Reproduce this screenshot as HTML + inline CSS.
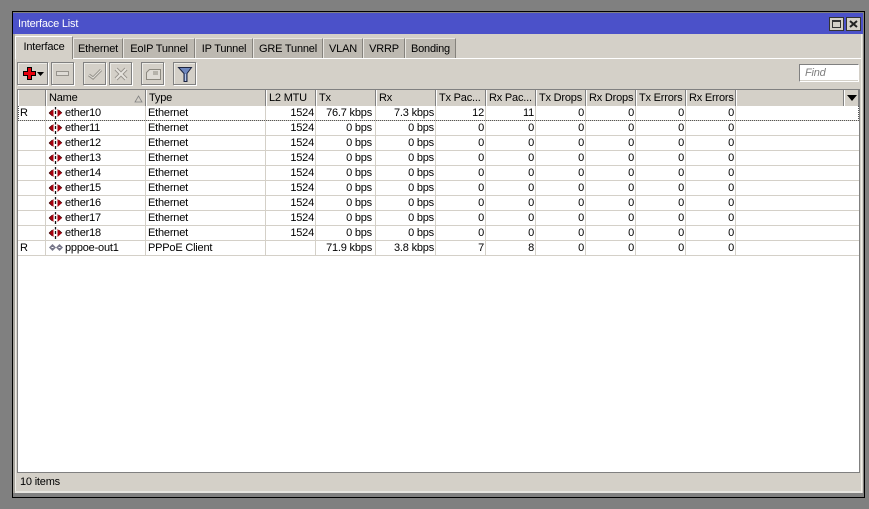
<!DOCTYPE html>
<html><head><meta charset="utf-8">
<style>
html,body{margin:0;padding:0;width:869px;height:509px;overflow:hidden;background:#808080}
*{box-sizing:border-box}
body{font:11px/13px "Liberation Sans",sans-serif;letter-spacing:-.2px;color:#000;position:relative}
.a{position:absolute}
.t{position:absolute;white-space:nowrap}
.tab{position:absolute;top:38px;height:20px;background:#bdb9b1;border-top:1px solid #e8e6e1;border-right:1px solid #85827c;border-left:1px solid #e8e6e1;text-align:center;line-height:20px;white-space:nowrap}
.btn{position:absolute;top:62px;height:23px;background:#d4d0c8;border:1px solid #808080;box-shadow:1px 1px 0 #fff,inset 1px 1px 0 #ecebe6}
.hc{position:absolute;top:90px;height:16px;background:#d4d0c8;border-left:1px solid #fff;border-right:1px solid #808080;padding-left:2px;line-height:16px;white-space:nowrap;overflow:hidden}
.row{position:absolute;left:18px;width:841px;height:15px;border-bottom:1px solid #d4d0c8}
.v{position:absolute;top:106px;height:150px;width:1px;background:#d4d0c8}
.c{position:absolute;top:0;line-height:14px;white-space:nowrap}
.r{text-align:right}
</style></head><body>
<div class="a" style="left:12px;top:11px;width:853px;height:487px;background:#000"></div>
<div class="a" style="left:13px;top:12px;width:851px;height:485px;background:#808080"></div>
<div class="a" style="left:13px;top:13px;width:850px;height:21px;background:#4b51c9"></div>
<div class="a" style="left:13px;top:34px;width:850px;height:459px;background:#d4d0c8"></div>
<div class="a" style="left:13px;top:34px;width:2px;height:459px;background:#a5a29b"></div>
<div class="a" style="left:15px;top:59px;width:1px;height:433px;background:#f0eee9"></div>
<div class="a" style="left:15px;top:491px;width:847px;height:2px;background:#e8e6e1"></div>
<div class="a" style="left:861px;top:34px;width:1px;height:459px;background:#f0eee9"></div>
<div class="t" style="left:18px;top:18px;color:#fff">Interface List</div>
<div class="a" style="left:829px;top:17px;width:15px;height:14px;background:#d4d0c8;border:1px solid #333"><div class="a" style="left:2px;top:2px;width:9px;height:8px;border:1px solid #333;border-top-width:2px"></div></div>
<div class="a" style="left:846px;top:17px;width:15px;height:14px;background:#d4d0c8;border:1px solid #333"><svg class="a" style="left:2px;top:2px" width="9" height="8"><path d="M1 1L8 7M8 1L1 7" stroke="#222" stroke-width="2"/></svg></div>

<div class="a" style="left:15px;top:58px;width:846px;height:1px;background:#fff"></div>
<div class="tab" style="left:73px;width:50px">Ethernet</div>
<div class="tab" style="left:123px;width:72px">EoIP Tunnel</div>
<div class="tab" style="left:195px;width:58px">IP Tunnel</div>
<div class="tab" style="left:253px;width:70px">GRE Tunnel</div>
<div class="tab" style="left:323px;width:40px">VLAN</div>
<div class="tab" style="left:363px;width:42px">VRRP</div>
<div class="tab" style="left:405px;width:51px">Bonding</div>
<div class="tab" style="left:15px;top:36px;width:58px;height:23px;background:#d4d0c8;border-top:1px solid #fff;border-left:1px solid #fff;border-bottom:0;line-height:21px">Interface</div>

<div class="btn" style="left:17px;width:31px"><svg class="a" style="left:3px;top:2px" width="26" height="18"><path d="M6.500 2.500h4v4h4v4h-4v4h-4v-4h-4v-4h4z" fill="#e8000c" stroke="#000"/><path d="M16 7h7l-3.500 4z" fill="#000"/></svg></div>
<div class="btn" style="left:51px;width:23px"><div class="a" style="left:4px;top:8px;width:13px;height:5px;background:#dedbd5;border:1px solid #96938c"></div></div>
<div class="btn" style="left:83px;width:23px"><svg class="a" style="left:3px;top:3px" width="16" height="16"><path d="M2 9l4 3 8-8" fill="none" stroke="#96938c" stroke-width="3"/><path d="M2 9l4 3 8-8" fill="none" stroke="#e6e3dd" stroke-width="1"/></svg></div>
<div class="btn" style="left:109px;width:23px"><svg class="a" style="left:3px;top:3px" width="16" height="16"><path d="M3 3l10 10M13 3L3 13" fill="none" stroke="#96938c" stroke-width="4"/><path d="M3 3l10 10M13 3L3 13" fill="none" stroke="#e6e3dd" stroke-width="2"/></svg></div>
<div class="btn" style="left:141px;width:23px"><svg class="a" style="left:3px;top:4px" width="17" height="14"><path d="M1.500 5.500l3-3h11v10h-14z" fill="#dedbd5" stroke="#8c8980"/><path d="M8 5h5M8 7h5" stroke="#8c8980"/></svg></div>
<div class="btn" style="left:173px;width:23px"><svg class="a" style="left:3px;top:3px" width="17" height="17"><path d="M1.500 1.500h13L10 7.500v8H7v-8z" fill="#6d86bd" stroke="#1c2440"/><path d="M8 8h1v7H8z" fill="#b9c8e6"/></svg></div>

<div class="a" style="left:799px;top:64px;width:60px;height:18px;background:#fff;border:1px solid #808080;border-right-color:#fff;border-bottom-color:#fff;box-shadow:inset 0 -1px #d4d0c8"></div>
<div class="t" style="left:805px;top:67px;color:#808080;font-style:italic">Find</div>

<div class="a" style="left:17px;top:89px;width:843px;height:384px;background:#fff;border:1px solid #808080"></div>

<div class="hc" style="left:18px;width:28px"></div>
<div class="hc" style="left:46px;width:100px">Name<svg class="a" style="left:87px;top:5px" width="9" height="8"><path d="M4.500 1L8 7H1z" fill="#d4d0c8" stroke="#808080" stroke-width=".8"/></svg></div>
<div class="hc" style="left:146px;width:120px">Type</div>
<div class="hc" style="left:266px;width:50px">L2 MTU</div>
<div class="hc" style="left:316px;width:60px">Tx</div>
<div class="hc" style="left:376px;width:60px">Rx</div>
<div class="hc" style="left:436px;width:50px">Tx Pac...</div>
<div class="hc" style="left:486px;width:50px">Rx Pac...</div>
<div class="hc" style="left:536px;width:50px">Tx Drops</div>
<div class="hc" style="left:586px;width:50px">Rx Drops</div>
<div class="hc" style="left:636px;width:50px">Tx Errors</div>
<div class="hc" style="left:686px;width:50px">Rx Errors</div>
<div class="hc" style="left:736px;width:108px"></div>
<div class="hc" style="left:844px;width:15px"><svg class="a" style="left:2px;top:5px" width="10" height="6"><path d="M0 0h10L5 6z" fill="#000"/></svg></div>

<div class="v" style="left:45px"></div><div class="v" style="left:145px"></div><div class="v" style="left:265px"></div><div class="v" style="left:315px"></div><div class="v" style="left:375px"></div><div class="v" style="left:435px"></div><div class="v" style="left:485px"></div><div class="v" style="left:535px"></div><div class="v" style="left:585px"></div><div class="v" style="left:635px"></div><div class="v" style="left:685px"></div><div class="v" style="left:735px"></div>

<svg width="0" height="0" style="position:absolute"><defs>
<g id="e"><path d="M0 4l4.500-4v8z" fill="#a8000e"/><path d="M13 4L8.500 0v8z" fill="#a8000e"/><path d="M0 4l3-2.700M0 4l3 2.700M13 4l-3-2.700" stroke="#300" stroke-width=".7" fill="none"/><path d="M6.500 -2v2.500M6.500 2v3M6.500 7v3" stroke="#111" stroke-width="1.300"/></g>
<g id="p"><path d="M0 3.500l3.500-3.500 3.500 3.500-3.500 3.500z" fill="#77778a"/><path d="M7 3.500l3.500-3.500 3.500 3.500-3.500 3.500z" fill="#77778a"/><path d="M2.500 3.500h2M9.500 3.500h2" stroke="#fff"/></g>
</defs></svg>

<div class="row" style="top:106px;height:15px"><div class="c" style="left:2px">R</div><svg class="a" style="left:31px;top:3px;overflow:visible" width="13" height="8"><use href="#e"/></svg><div class="c" style="left:47px">ether10</div><div class="c" style="left:130px">Ethernet</div><div class="c r" style="left:248px;width:48px">1524</div><div class="c r" style="left:298px;width:56px">76.7 kbps</div><div class="c r" style="left:358px;width:58px">7.3 kbps</div><div class="c r" style="left:418px;width:48px">12</div><div class="c r" style="left:468px;width:48px">11</div><div class="c r" style="left:518px;width:48px">0</div><div class="c r" style="left:568px;width:48px">0</div><div class="c r" style="left:618px;width:48px">0</div><div class="c r" style="left:668px;width:48px">0</div></div>
<div class="row" style="top:121px"><svg class="a" style="left:31px;top:3px;overflow:visible" width="13" height="8"><use href="#e"/></svg><div class="c" style="left:47px">ether11</div><div class="c" style="left:130px">Ethernet</div><div class="c r" style="left:248px;width:48px">1524</div><div class="c r" style="left:298px;width:56px">0 bps</div><div class="c r" style="left:358px;width:58px">0 bps</div><div class="c r" style="left:418px;width:48px">0</div><div class="c r" style="left:468px;width:48px">0</div><div class="c r" style="left:518px;width:48px">0</div><div class="c r" style="left:568px;width:48px">0</div><div class="c r" style="left:618px;width:48px">0</div><div class="c r" style="left:668px;width:48px">0</div></div>
<div class="row" style="top:136px"><svg class="a" style="left:31px;top:3px;overflow:visible" width="13" height="8"><use href="#e"/></svg><div class="c" style="left:47px">ether12</div><div class="c" style="left:130px">Ethernet</div><div class="c r" style="left:248px;width:48px">1524</div><div class="c r" style="left:298px;width:56px">0 bps</div><div class="c r" style="left:358px;width:58px">0 bps</div><div class="c r" style="left:418px;width:48px">0</div><div class="c r" style="left:468px;width:48px">0</div><div class="c r" style="left:518px;width:48px">0</div><div class="c r" style="left:568px;width:48px">0</div><div class="c r" style="left:618px;width:48px">0</div><div class="c r" style="left:668px;width:48px">0</div></div>
<div class="row" style="top:151px"><svg class="a" style="left:31px;top:3px;overflow:visible" width="13" height="8"><use href="#e"/></svg><div class="c" style="left:47px">ether13</div><div class="c" style="left:130px">Ethernet</div><div class="c r" style="left:248px;width:48px">1524</div><div class="c r" style="left:298px;width:56px">0 bps</div><div class="c r" style="left:358px;width:58px">0 bps</div><div class="c r" style="left:418px;width:48px">0</div><div class="c r" style="left:468px;width:48px">0</div><div class="c r" style="left:518px;width:48px">0</div><div class="c r" style="left:568px;width:48px">0</div><div class="c r" style="left:618px;width:48px">0</div><div class="c r" style="left:668px;width:48px">0</div></div>
<div class="row" style="top:166px"><svg class="a" style="left:31px;top:3px;overflow:visible" width="13" height="8"><use href="#e"/></svg><div class="c" style="left:47px">ether14</div><div class="c" style="left:130px">Ethernet</div><div class="c r" style="left:248px;width:48px">1524</div><div class="c r" style="left:298px;width:56px">0 bps</div><div class="c r" style="left:358px;width:58px">0 bps</div><div class="c r" style="left:418px;width:48px">0</div><div class="c r" style="left:468px;width:48px">0</div><div class="c r" style="left:518px;width:48px">0</div><div class="c r" style="left:568px;width:48px">0</div><div class="c r" style="left:618px;width:48px">0</div><div class="c r" style="left:668px;width:48px">0</div></div>
<div class="row" style="top:181px"><svg class="a" style="left:31px;top:3px;overflow:visible" width="13" height="8"><use href="#e"/></svg><div class="c" style="left:47px">ether15</div><div class="c" style="left:130px">Ethernet</div><div class="c r" style="left:248px;width:48px">1524</div><div class="c r" style="left:298px;width:56px">0 bps</div><div class="c r" style="left:358px;width:58px">0 bps</div><div class="c r" style="left:418px;width:48px">0</div><div class="c r" style="left:468px;width:48px">0</div><div class="c r" style="left:518px;width:48px">0</div><div class="c r" style="left:568px;width:48px">0</div><div class="c r" style="left:618px;width:48px">0</div><div class="c r" style="left:668px;width:48px">0</div></div>
<div class="row" style="top:196px"><svg class="a" style="left:31px;top:3px;overflow:visible" width="13" height="8"><use href="#e"/></svg><div class="c" style="left:47px">ether16</div><div class="c" style="left:130px">Ethernet</div><div class="c r" style="left:248px;width:48px">1524</div><div class="c r" style="left:298px;width:56px">0 bps</div><div class="c r" style="left:358px;width:58px">0 bps</div><div class="c r" style="left:418px;width:48px">0</div><div class="c r" style="left:468px;width:48px">0</div><div class="c r" style="left:518px;width:48px">0</div><div class="c r" style="left:568px;width:48px">0</div><div class="c r" style="left:618px;width:48px">0</div><div class="c r" style="left:668px;width:48px">0</div></div>
<div class="row" style="top:211px"><svg class="a" style="left:31px;top:3px;overflow:visible" width="13" height="8"><use href="#e"/></svg><div class="c" style="left:47px">ether17</div><div class="c" style="left:130px">Ethernet</div><div class="c r" style="left:248px;width:48px">1524</div><div class="c r" style="left:298px;width:56px">0 bps</div><div class="c r" style="left:358px;width:58px">0 bps</div><div class="c r" style="left:418px;width:48px">0</div><div class="c r" style="left:468px;width:48px">0</div><div class="c r" style="left:518px;width:48px">0</div><div class="c r" style="left:568px;width:48px">0</div><div class="c r" style="left:618px;width:48px">0</div><div class="c r" style="left:668px;width:48px">0</div></div>
<div class="row" style="top:226px"><svg class="a" style="left:31px;top:3px;overflow:visible" width="13" height="8"><use href="#e"/></svg><div class="c" style="left:47px">ether18</div><div class="c" style="left:130px">Ethernet</div><div class="c r" style="left:248px;width:48px">1524</div><div class="c r" style="left:298px;width:56px">0 bps</div><div class="c r" style="left:358px;width:58px">0 bps</div><div class="c r" style="left:418px;width:48px">0</div><div class="c r" style="left:468px;width:48px">0</div><div class="c r" style="left:518px;width:48px">0</div><div class="c r" style="left:568px;width:48px">0</div><div class="c r" style="left:618px;width:48px">0</div><div class="c r" style="left:668px;width:48px">0</div></div>
<div class="row" style="top:241px"><div class="c" style="left:2px">R</div><svg class="a" style="left:31px;top:3px" width="14" height="7"><use href="#p"/></svg><div class="c" style="left:47px">pppoe-out1</div><div class="c" style="left:130px">PPPoE Client</div><div class="c r" style="left:298px;width:56px">71.9 kbps</div><div class="c r" style="left:358px;width:58px">3.8 kbps</div><div class="c r" style="left:418px;width:48px">7</div><div class="c r" style="left:468px;width:48px">8</div><div class="c r" style="left:518px;width:48px">0</div><div class="c r" style="left:568px;width:48px">0</div><div class="c r" style="left:618px;width:48px">0</div><div class="c r" style="left:668px;width:48px">0</div></div>

<div class="a" style="left:18px;top:106px;width:841px;height:15px;border:1px dotted #555;border-top:0"></div>

<div class="a" style="left:17px;top:472px;width:843px;height:1px;background:#808080"></div>
<div class="t" style="left:20px;top:476px">10 items</div>
</body></html>
